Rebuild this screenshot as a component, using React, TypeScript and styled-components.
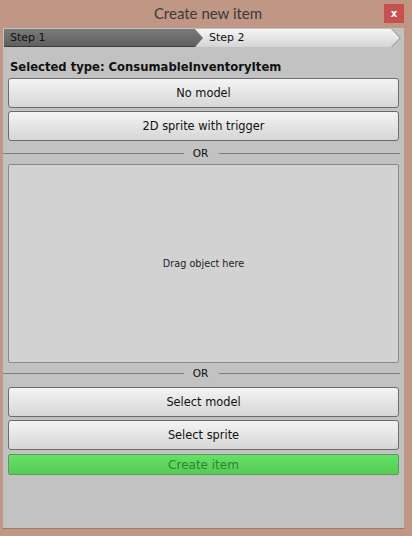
import React from "react";
import styled, { createGlobalStyle } from "styled-components";

const Global = createGlobalStyle`
  html, body { margin: 0; padding: 0; }
  body {
    background: #c09684;
    font-family: "DejaVu Sans", Verdana, sans-serif;
  }
  * { box-sizing: border-box; }
`;

const Window = styled.div`
  width: 412px;
  height: 536px;
  display: flex;
  flex-direction: column;
  background: #c09684;
`;

const TitleBar = styled.div`
  height: 28px;
  display: grid;
  grid-template-columns: 1fr auto 1fr;
  align-items: start;
`;

const Title = styled.div`
  grid-column: 2;
  font-family: Lato, "Open Sans", sans-serif;
  font-size: 15px;
  line-height: 27px;
  color: #3a3a3a;
  margin-left: 4px;
`;

const Close = styled.div`
  grid-column: 3;
  justify-self: end;
  margin: 4px 8px 0 0;
  width: 20px;
  height: 19px;
  background: #c75050;
  color: #fff;
  font-family: "DejaVu Sans", sans-serif;
  font-weight: bold;
  font-size: 10px;
  display: flex;
  align-items: center;
  justify-content: center;
  padding-bottom: 1px;
`;

const Panel = styled.div`
  flex: 1;
  margin: 0 8px 7px 3px;
  background: #c2c2c2;
  border-bottom: 1px solid #9b7a6c;
  display: flex;
  flex-direction: column;
  padding: 1px 5px 0 5px;
`;

const StepBar = styled.div`
  display: flex;
  height: 18px;
  margin: 0 -4px 0 -4px;
`;

const StepDark = styled.div`
  position: relative;
  z-index: 1;
  width: 199px;
  height: 18px;
  background: linear-gradient(#7a7a7a, #5e5e5e);
  clip-path: polygon(0 0, 191px 0, 199px 9px, 191px 18px, 0 18px);
  font-size: 11px;
  color: #111;
  padding-left: 6px;
  line-height: 18px;
  box-shadow: inset 0 -1px 0 #3c3c3c;
`;

const StepLightOuter = styled.div`
  margin-left: -8px;
  width: 206px;
  height: 18px;
  background: #9a9a9a;
  clip-path: polygon(0 0, 197px 0, 206px 9px, 197px 18px, 0 18px);
`;

const StepLightInner = styled.div`
  height: 18px;
  background: linear-gradient(#f6f6f6, #d4d4d4);
  clip-path: polygon(0 0, 196px 0, 204.5px 9px, 196px 18px, 0 18px);
  font-size: 11px;
  color: #111;
  padding-left: 14px;
  line-height: 18px;
`;

const TypeLabel = styled.div`
  font-weight: bold;
  font-size: 11.6px;
  color: #111;
  margin: 13px 0 4px 2px;
  line-height: 14px;
  white-space: nowrap;
`;

const Button = styled.div<{ $mt?: number }>`
  height: 30px;
  margin-top: ${(p) => p.$mt ?? 0}px;
  border: 1px solid #6b6b6b;
  border-radius: 3px;
  background: linear-gradient(#f4f4f4, #d6d6d6);
  display: flex;
  align-items: center;
  justify-content: center;
  font-size: 11.4px;
  color: #111;
  white-space: nowrap;
`;

const CreateButton = styled.div`
  height: 21px;
  margin-top: 4px;
  border: 1px solid #5a9a5a;
  border-radius: 2px;
  background: linear-gradient(#66e066, #55cc55);
  display: flex;
  align-items: center;
  justify-content: center;
  font-size: 12px;
  color: #347f34;
`;

const Separator = styled.div<{ $mt: number; $mb: number }>`
  display: flex;
  align-items: center;
  height: 14px;
  margin: ${(p) => p.$mt}px -1px ${(p) => p.$mb}px -5px;
  font-size: 10.5px;
  color: #111;
  &::before, &::after {
    content: "";
    flex: 1;
    height: 1px;
    background: #7e7e7e;
  }
  &::before { margin-right: 9px; }
  &::after { margin-left: 11px; }
`;

const DropArea = styled.div`
  height: 199px;
  border: 1px solid #8a8a8a;
  border-radius: 2px;
  background: #d2d2d2;
  display: flex;
  align-items: center;
  justify-content: center;
  font-size: 9.7px;
  color: #222;
`;

export default function App() {
  return (
    <>
      <Global />
      <Window>
        <TitleBar>
          <Title>Create new item</Title>
          <Close>x</Close>
        </TitleBar>
        <Panel>
          <StepBar>
            <StepDark>Step 1</StepDark>
            <StepLightOuter>
              <StepLightInner>Step 2</StepLightInner>
            </StepLightOuter>
          </StepBar>
          <TypeLabel>Selected type: ConsumableInventoryItem</TypeLabel>
          <Button>No model</Button>
          <Button $mt={3}>2D sprite with trigger</Button>
          <Separator $mt={5} $mb={4}>OR</Separator>
          <DropArea>Drag object here</DropArea>
          <Separator $mt={3} $mb={7}>OR</Separator>
          <Button>Select model</Button>
          <Button $mt={3}>Select sprite</Button>
          <CreateButton>Create item</CreateButton>
        </Panel>
      </Window>
    </>
  );
}
